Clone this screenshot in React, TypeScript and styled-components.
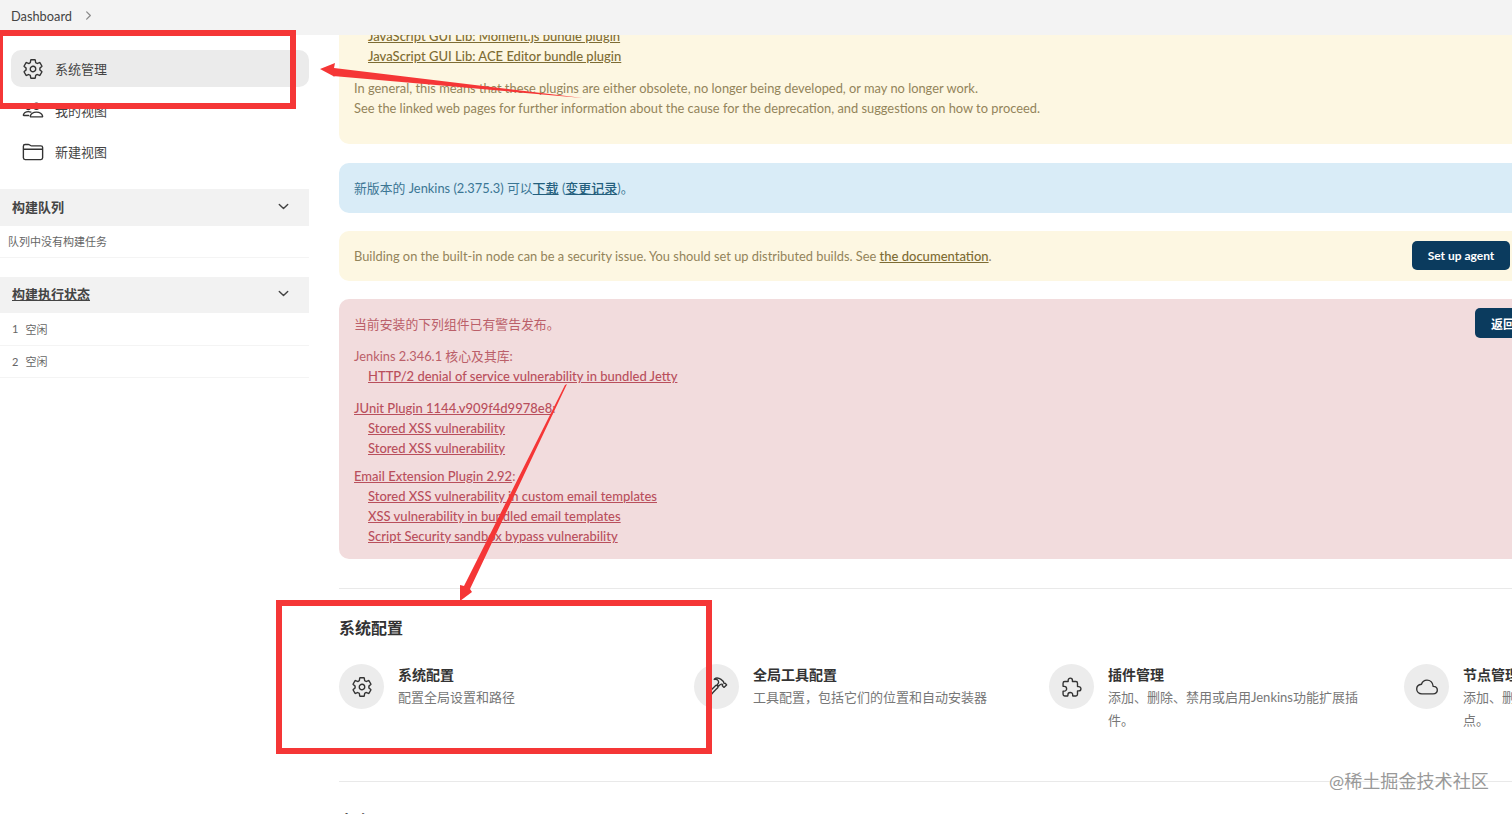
import React from 'react';
import styled, {createGlobalStyle} from 'styled-components';
import {
	IoSettingsOutline,
	IoPeopleOutline,
	IoFolderOutline,
	IoHammerOutline,
	IoExtensionPuzzleOutline,
	IoCloudOutline,
	IoChevronDown,
	IoChevronForward,
} from 'react-icons/io5';

const fontStack = '"Lato", "Noto Sans CJK SC", sans-serif';

const GlobalStyle = createGlobalStyle`
	html, body {
		margin: 0;
		height: 814px;
		overflow: hidden;
		background: #fff;
	}
	body {
		font-family: ${fontStack};
		font-size: 13px;
		color: #333;
	}
`;

const Page = styled.div`
	position: relative;
	width: 1512px;
	height: 814px;
	overflow: hidden;
`;

const Header = styled.header`
	height: 35px;
	background: #f3f3f3;
	display: flex;
	align-items: center;
	padding: 0 0 4px 11px;
	box-sizing: border-box;
	gap: 10px;
	color: #444;
	font-size: 12.8px;
	svg {
		color: #888;
		font-size: 13px;
	}
`;

const Body = styled.div`
	display: flex;
	gap: 30px;
`;

const Sidebar = styled.aside`
	width: 309px;
	flex: none;
	padding-top: 15px;
`;

const Tasks = styled.nav`
	display: flex;
	flex-direction: column;
	gap: 4.5px;
	padding-left: 11px;
	margin-bottom: 19px;
`;

const Task = styled.div<{$active?: boolean}>`
	height: 37px;
	border-radius: 10px;
	display: flex;
	align-items: center;
	gap: 11px;
	padding-left: 11px;
	background: ${p => (p.$active ? '#ebebeb' : 'transparent')};
	color: #444;
	svg {
		font-size: 22px;
		color: #333;
	}
`;

const PaneHead = styled.div<{$link?: boolean}>`
	height: 36.5px;
	background: #f2f2f2;
	display: flex;
	align-items: center;
	justify-content: space-between;
	padding: 0 18px 2px 12px;
	box-sizing: border-box;
	font-weight: 700;
	color: #444;
	text-decoration: ${p => (p.$link ? 'underline' : 'none')};
	svg {
		font-size: 15px;
		color: #444;
	}
`;

const Pane = styled.section`
	margin-bottom: 18.5px;
`;

const PaneRow = styled.div<{$inset?: number}>`
	height: 32.5px;
	box-sizing: border-box;
	border-bottom: 1px solid #f4f4f4;
	display: flex;
	align-items: center;
	gap: 7px;
	padding-left: ${p => p.$inset ?? 12}px;
	font-size: 11px;
	color: #666;
`;

const Main = styled.main`
	width: 1190px;
	flex: none;
	display: flex;
	flex-direction: column;
	gap: 18px;
`;

const Alert = styled.div<{$kind: 'warning' | 'info' | 'danger'}>`
	position: relative;
	box-sizing: border-box;
	border-radius: 10px;
	padding: 0 15px;
	font-size: 12.85px;
	line-height: 20px;
	overflow: hidden;
	background: ${p => ({warning: '#fdf7e2', info: '#d9ecf7', danger: '#f2dcdd'})[p.$kind]};
	color: ${p => ({warning: '#93845a', info: '#3b7694', danger: '#bb5f69'})[p.$kind]};
	a {
		font-size: 13px;
		font-weight: 500;
		color: ${p => ({warning: '#7d6c34', info: '#245f7d', danger: '#b94f5c'})[p.$kind]};
		text-decoration: underline;
	}
`;

const ClippedAlert = styled(Alert)`
	height: 109px;
	margin-bottom: 1px;
	border-radius: 0 0 10px 10px;
`;

const ClippedLines = styled.div`
	margin-top: -9px;
`;

const BarAlert = styled(Alert)`
	height: 50px;
	display: flex;
	align-items: center;
	justify-content: space-between;
	padding: 0 19px 1px 15px;
`;

const DangerAlert = styled(Alert)`
	height: 260px;
	padding-top: 15px;
`;

const Block = styled.div<{$gap?: number}>`
	margin-bottom: ${p => p.$gap ?? 12}px;
`;

const Indented = styled.div`
	padding-left: 14px;
`;

const Action = styled.button`
	border: 0;
	height: 29px;
	width: 98px;
	padding: 0;
	border-radius: 5px;
	background: #0b3b5e;
	color: #fff;
	font: 700 12px ${fontStack};
	white-space: nowrap;
`;

const DangerAction = styled(Action)`
	position: absolute;
	top: 9px;
	left: 1136px;
	width: 80px;
	height: 30px;
`;

const Section = styled.section`
	border-top: 1px solid #e9e9e9;
	margin-top: 11px;
	padding: 27px 0 49px;
`;

const NextSection = styled(Section)`
	margin-top: -18px;
`;

const SectionTitle = styled.h2`
	margin: 0 0 24px;
	font-size: 16px;
	line-height: 24px;
	font-weight: 700;
	color: #333;
`;

const Cards = styled.div`
	display: grid;
	grid-template-columns: repeat(4, 355px);
`;

const Card = styled.div`
	display: flex;
	gap: 14px;
`;

const IconCircle = styled.div`
	width: 45px;
	height: 45px;
	flex: none;
	border-radius: 50%;
	background: #ececec;
	display: flex;
	align-items: center;
	justify-content: center;
	color: #333;
	svg {
		font-size: 22px;
	}
`;

const CardText = styled.div`
	width: 260px;
`;

const CardTitle = styled.div`
	font-size: 14px;
	font-weight: 700;
	line-height: 22px;
	color: #333;
`;

const CardDesc = styled.div`
	line-height: 23px;
	color: #777;
`;

const RedBox = styled.div<{$box: [number, number, number, number]}>`
	position: absolute;
	left: ${p => p.$box[0]}px;
	top: ${p => p.$box[1]}px;
	width: ${p => p.$box[2]}px;
	height: ${p => p.$box[3]}px;
	box-sizing: border-box;
	border: 6px solid #f53636;
`;

const Arrows = styled.svg`
	position: absolute;
	left: 0;
	top: 0;
	pointer-events: none;
`;

const Watermark = styled.div`
	position: absolute;
	left: 1329px;
	top: 768px;
	font-size: 18.1px;
	line-height: 26px;
	color: #999;
	text-shadow: 0 0 2px #fff;
`;

const cards = [
	{icon: <IoSettingsOutline />, title: '系统配置', desc: '配置全局设置和路径'},
	{icon: <IoHammerOutline />, title: '全局工具配置', desc: '工具配置，包括它们的位置和自动安装器'},
	{icon: <IoExtensionPuzzleOutline />, title: '插件管理', desc: '添加、删除、禁用或启用Jenkins功能扩展插件。'},
	{icon: <IoCloudOutline />, title: '节点管理', desc: '添加、删除、控制和监视系统运行任务的节点。'},
];

export default function App() {
	return (
		<Page>
			<GlobalStyle />
			<Header>
				Dashboard <IoChevronForward />
			</Header>
			<Body>
				<Sidebar>
					<Tasks>
						<Task $active>
							<IoSettingsOutline />
							系统管理
						</Task>
						<Task>
							<IoPeopleOutline />
							我的视图
						</Task>
						<Task>
							<IoFolderOutline />
							新建视图
						</Task>
					</Tasks>
					<Pane>
						<PaneHead>
							构建队列 <IoChevronDown />
						</PaneHead>
						<PaneRow $inset={8}>队列中没有构建任务</PaneRow>
					</Pane>
					<Pane>
						<PaneHead $link>
							构建执行状态 <IoChevronDown />
						</PaneHead>
						<PaneRow>
							<span>1</span>
							<span>空闲</span>
						</PaneRow>
						<PaneRow>
							<span>2</span>
							<span>空闲</span>
						</PaneRow>
					</Pane>
				</Sidebar>
				<Main>
					<ClippedAlert $kind="warning">
						<ClippedLines>
							<Block $gap={11.5}>
								<Indented>
									<div>
										<a>JavaScript GUI Lib: Moment.js bundle plugin</a>
									</div>
									<div>
										<a>JavaScript GUI Lib: ACE Editor bundle plugin</a>
									</div>
								</Indented>
							</Block>
							<div>In general, this means that these plugins are either obsolete, no longer being developed, or may no longer work.</div>
							<div>See the linked web pages for further information about the cause for the deprecation, and suggestions on how to proceed.</div>
						</ClippedLines>
					</ClippedAlert>
					<BarAlert $kind="info">
						<div>
							新版本的 Jenkins (2.375.3) 可以<a>下载</a> (<a>变更记录</a>)。
						</div>
					</BarAlert>
					<BarAlert $kind="warning">
						<div>
							Building on the built-in node can be a security issue. You should set up distributed builds. See <a>the documentation</a>.
						</div>
						<Action>Set up agent</Action>
					</BarAlert>
					<DangerAlert $kind="danger">
						<DangerAction>返回设置</DangerAction>
						<Block>当前安装的下列组件已有警告发布。</Block>
						<Block>
							Jenkins 2.346.1 核心及其库:
							<Indented>
								<a>HTTP/2 denial of service vulnerability in bundled Jetty</a>
							</Indented>
						</Block>
						<Block $gap={8}>
							<a>JUnit Plugin 1144.v909f4d9978e8</a>:
							<Indented>
								<div>
									<a>Stored XSS vulnerability</a>
								</div>
								<div>
									<a>Stored XSS vulnerability</a>
								</div>
							</Indented>
						</Block>
						<Block>
							<a>Email Extension Plugin 2.92</a>:
							<Indented>
								<div>
									<a>Stored XSS vulnerability in custom email templates</a>
								</div>
								<div>
									<a>XSS vulnerability in bundled email templates</a>
								</div>
								<div>
									<a>Script Security sandbox bypass vulnerability</a>
								</div>
							</Indented>
						</Block>
					</DangerAlert>
					<Section>
						<SectionTitle>系统配置</SectionTitle>
						<Cards>
							{cards.map(card => (
								<Card key={card.title}>
									<IconCircle>{card.icon}</IconCircle>
									<CardText>
										<CardTitle>{card.title}</CardTitle>
										<CardDesc>{card.desc}</CardDesc>
									</CardText>
								</Card>
							))}
						</Cards>
					</Section>
					<NextSection>
						<SectionTitle>安全</SectionTitle>
					</NextSection>
				</Main>
			</Body>
			<Arrows width="1512" height="814" viewBox="0 0 1512 814">
				<polygon points="320,69 335,63 334,68 583,98 333,76 335,77" fill="#f53636" />
				<polygon points="567,384 470,589 472,592 460,601 460,585 464,586 565,385" fill="#f53636" />
			</Arrows>
			<RedBox $box={[-3, 30, 299, 79]} />
			<RedBox $box={[276, 600, 436, 154]} />
			<Watermark>@稀土掘金技术社区</Watermark>
		</Page>
	);
}
